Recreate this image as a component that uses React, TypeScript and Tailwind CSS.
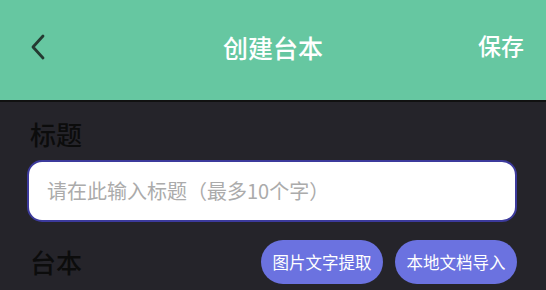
import React from "react";

export default function App() {
  return (
    <div
      className="w-[546px] h-[290px] overflow-hidden bg-[#25242a]"
      style={{ fontFamily: '"Noto Sans CJK SC", "Noto Sans", sans-serif' }}
    >
      <div className="relative h-[102px] bg-[#66c7a1] flex items-center justify-center pb-[6px] border-b-2 border-[#111]">
        <button className="absolute left-[29px] top-[33px] w-[18px] h-[28px] flex items-center justify-center">
          <svg width="16" height="26" viewBox="0 0 16 26" fill="none">
            <path d="M13 2 L3 13 L13 24" stroke="#243a31" strokeWidth="2.8" strokeLinecap="round" strokeLinejoin="round" />
          </svg>
        </button>
        <div className="text-white text-[25px] font-medium leading-none">创建台本</div>
        <div className="absolute right-[22px] top-[34px] text-white text-[23px] font-medium leading-none">保存</div>
      </div>
      <div className="pl-[27px] pr-[29px] pt-[14px]">
        <div className="pl-[3px] text-[26px] font-medium leading-[36px] text-[#0c0c0c]">标题</div>
        <div className="mt-[8px] h-[62px] rounded-[15px] bg-white border-2 border-[#3c3a9c] flex items-center pl-[18px]">
          <span className="text-[20px] text-[#ababab] leading-none">请在此输入标题（最多10个字）</span>
        </div>
        <div className="mt-[18px] flex items-start justify-between">
          <div className="pl-[3px] text-[26px] font-medium leading-[36px] text-[#0c0c0c] mt-[4px]">台本</div>
          <div className="flex gap-[12px]">
            <button className="w-[122px] h-[44px] rounded-full bg-[#6b72e0] text-white text-[16.5px] leading-none">图片文字提取</button>
            <button className="w-[122px] h-[44px] rounded-full bg-[#6b72e0] text-white text-[16.5px] leading-none">本地文档导入</button>
          </div>
        </div>
      </div>
    </div>
  );
}
